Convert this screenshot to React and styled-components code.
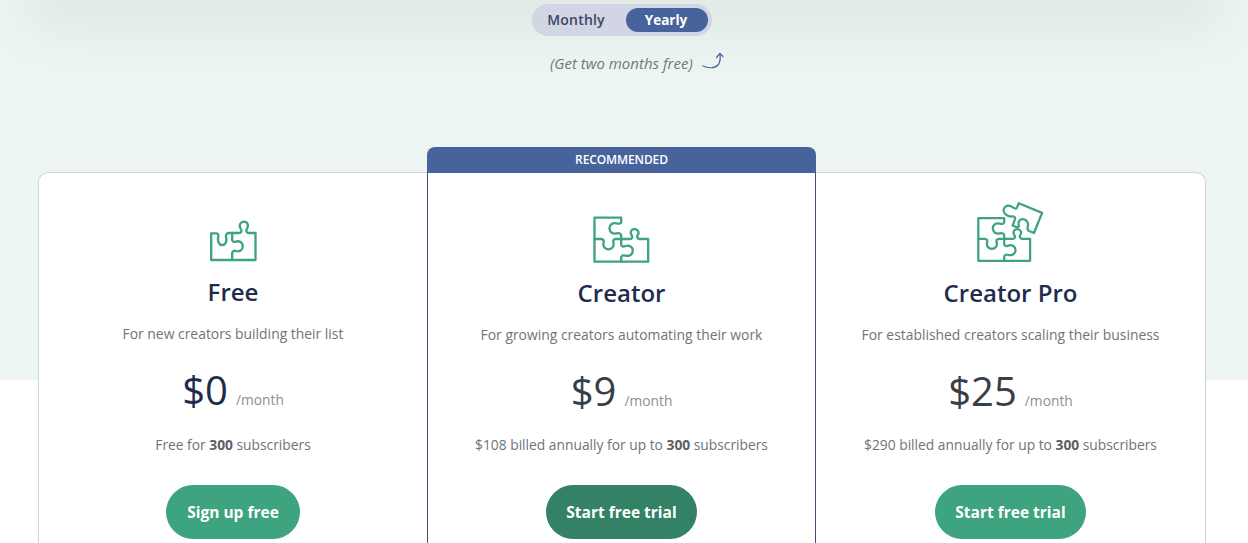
import React from "react";
import styled, { createGlobalStyle } from "styled-components";

const GlobalStyle = createGlobalStyle`
  html, body {
    margin: 0;
    padding: 0;
    background: #ffffff;
    font-family: "Open Sans", "Liberation Sans", sans-serif;
  }
`;

const plans = [
  {
    name: "Free",
    desc: "For new creators building their list",
    price: "$0",
    billing: "Free for",
    cta: "Sign up free",
    icon: "free",
  },
  {
    name: "Creator",
    desc: "For growing creators automating their work",
    price: "$9",
    billing: "$108 billed annually for up to",
    cta: "Start free trial",
    icon: "creator",
    recommended: true,
  },
  {
    name: "Creator Pro",
    desc: "For established creators scaling their business",
    price: "$25",
    billing: "$290 billed annually for up to",
    cta: "Start free trial",
    icon: "pro",
  },
];

const PuzzleIcon = ({ kind }) => {
  if (kind === "free") {
    return (
      <IconSvg width="50" height="46" viewBox="52.500 33 150 138">
        <path d="M62 165V85H78C84 85 84 92 83 98C81 110 86 120 95 120C104 120 110 110 107 98C105 90 108 85 114 84H145C153 84 155 77 150 70C145 60 150 50 160 50C171 50 175 60 170 70C165 78 168 84 176 84H195V165Z" />
        <path d="M125 84V104C125 110 130 112 136 110C146 106 157 112 157 124C157 136 146 141 136 138C130 136 125 139 125 145V165" />
      </IconSvg>
    );
  }
  if (kind === "creator") {
    return (
      <IconSvg width="58" height="49" viewBox="37.500 25 174 147">
        <path d="M42 168V36H122V48C122 54 116 55 108 53C96 50 86 58 87 69C88 80 97 86 108 83C116 81 122 84 122 90V100H148C155 100 157 94 153 88C148 80 152 70 162 70C172 70 177 80 172 88C168 94 171 100 178 100H203V168Z" />
        <path d="M42 100H62C69 100 71 105 69 112C67 122 73 131 84 131C95 131 101 122 99 112C97 105 99 100 106 100H122V116C122 122 128 124 135 121C146 117 157 124 157 135C157 146 146 153 135 150C128 148 122 150 122 156V168" />
      </IconSvg>
    );
  }
  return (
    <IconSvg width="68" height="62" viewBox="31 16 210 186">
      <path d="M35 198V66H115V78C115 84 109 85 101 83C89 80 79 88 80 99C81 110 90 116 101 113C109 111 115 114 115 120V130H141C148 130 150 124 146 118C141 110 145 100 155 100C165 100 170 110 165 118C161 124 164 130 171 130H195V198Z" />
      <path d="M35 130H55C62 130 64 135 62 142C60 152 66 161 77 161C88 161 94 152 92 142C90 135 92 130 99 130H115V146C115 152 121 154 128 151C139 147 150 154 150 165C150 176 139 183 128 180C121 178 115 180 115 186V198" />
      <path d="M153 36L160 20L232 50L207 112L192 106C186 103 186 98 188 92C191 80 183 70 173 69C163 68 157 78 160 88C161 94 156 96 150 93L141 89L148 70C150 63 146 60 140 61C128 63 116 55 113 44C112 33 122 26 132 28C140 30 148 40 153 36Z" />
    </IconSvg>
  );
};

const CurvedArrow = () => (
  <ArrowSvg width="22" height="19" viewBox="0 0 22 19">
    <path d="M1 14C6 16.500 13 16.500 16 13C18.500 10 18.500 6 18 2" />
    <path d="M14.500 5.500L18 1.500L21 4.500" />
  </ArrowSvg>
);

const App = () => {
  return (
    <Page>
      <GlobalStyle />
      <TopShadow />
      <Toggle>
        <ToggleOption>Monthly</ToggleOption>
        <ToggleOption $active>Yearly</ToggleOption>
      </Toggle>
      <Note>
        <NoteText>(Get two months free)</NoteText>
        <CurvedArrow />
      </Note>
      <Plans>
        {plans.map((plan) => (
          <Card key={plan.name} $recommended={plan.recommended}>
            {plan.recommended && <Ribbon>RECOMMENDED</Ribbon>}
            <IconSlot $free={plan.icon === "free"}>
              <PuzzleIcon kind={plan.icon} />
            </IconSlot>
            <PlanName>{plan.name}</PlanName>
            <PlanDesc>{plan.desc}</PlanDesc>
            <PriceRow>
              <Price $navy={plan.icon === "free"}>{plan.price}</Price>
              <Per>/month</Per>
            </PriceRow>
            <Billing $free={plan.icon === "free"}>
              {plan.billing} <strong>300</strong> subscribers
            </Billing>
            <Cta $dark={plan.recommended} $free={plan.icon === "free"}>
              {plan.cta}
            </Cta>
          </Card>
        ))}
      </Plans>
    </Page>
  );
};

const Page = styled.div`
  height: 543px;
  overflow: hidden;
  background: linear-gradient(#ecf5f1 380px, #ffffff 380px);
  padding-top: 4px;
  box-sizing: border-box;
`;

const TopShadow = styled.div`
  height: 0;
  margin: -4px 40px 4px;
  box-shadow: 0 0 60px 12px rgba(70, 85, 80, 0.18);
`;

const Toggle = styled.div`
  width: 180px;
  height: 32px;
  margin-left: 532px;
  padding: 4px;
  box-sizing: border-box;
  display: flex;
  justify-content: space-between;
  background: #d2d5e3;
  border-radius: 16px;
`;

const ToggleOption = styled.div`
  width: 82px;
  height: 24px;
  line-height: 24px;
  text-align: center;
  text-indent: -2px;
  font-size: ${(p) => (p.$active ? "13.500px" : "14px")};
  font-weight: ${(p) => (p.$active ? 700 : 600)};
  letter-spacing: ${(p) => (p.$active ? "0" : "0.2px")};
  border-radius: 12px;
  color: ${(p) => (p.$active ? "#ffffff" : "#3d4663")};
  background: ${(p) => (p.$active ? "#48639c" : "transparent")};
`;

const Note = styled.div`
  display: flex;
  align-items: flex-start;
  gap: 9px;
  margin: 16px 0 0 550px;
  height: 120px;
`;

const NoteText = styled.span`
  font-size: 15px;
  line-height: 22px;
  font-style: italic;
  color: #6f7a77;
`;

const ArrowSvg = styled.svg`
  fill: none;
  stroke: #48639c;
  stroke-width: 1.200;
  stroke-linecap: round;
  stroke-linejoin: round;
`;

const Plans = styled.div`
  display: grid;
  grid-template-columns: 388px 389px 389px;
  margin: 0 42px 0 38px;
  background: #ffffff;
  border: 1px solid #cdd6dd;
  border-bottom: none;
  border-radius: 10px;
  height: 500px;
`;

const Card = styled.div`
  position: relative;
  display: flex;
  flex-direction: column;
  align-items: center;
  text-align: center;
  border-left: ${(p) => (p.$recommended ? "1px solid #3e4f74" : "none")};
  border-right: ${(p) => (p.$recommended ? "1px solid #3e4f74" : "none")};
`;

const Ribbon = styled.div`
  position: absolute;
  top: -26px;
  left: -1px;
  right: -1px;
  height: 26px;
  line-height: 26px;
  background: #48639c;
  color: #ffffff;
  font-size: 12px;
  font-weight: 600;
  letter-spacing: -0.1px;
  border-radius: 8px 8px 0 0;
`;

const IconSlot = styled.div`
  height: ${(p) => (p.$free ? "89px" : "90px")};
  display: flex;
  align-items: flex-end;
`;

const IconSvg = styled.svg`
  display: block;
  fill: none;
  stroke: #3ea37f;
  stroke-width: 7;
  stroke-linejoin: round;
  stroke-linecap: round;
`;

const PlanName = styled.h3`
  margin: 14px 0 0;
  font-size: 24px;
  line-height: 32px;
  font-weight: 600;
  color: #1f2d4d;
`;

const PlanDesc = styled.p`
  margin: 15px 0 0;
  font-size: 13.900px;
  line-height: 22px;
  color: #6e7479;
`;

const PriceRow = styled.div`
  display: flex;
  align-items: baseline;
  gap: 8px;
  margin-top: 17px;
  height: 55px;
`;

const Price = styled.span`
  font-size: 40px;
  line-height: 55px;
  color: ${(p) => (p.$navy ? "#1f2d4d" : "#3a3f47")};
`;

const Per = styled.span`
  font-size: 13.800px;
  color: #8b8f94;
`;

const Billing = styled.p`
  margin: ${(p) => (p.$free ? "17px" : "16px")} 0 0;
  font-size: 13.800px;
  line-height: 22px;
  color: #6e7479;

  strong {
    font-weight: 700;
    color: #5b6066;
  }
`;

const Cta = styled.div`
  margin-top: 29px;
  height: 54px;
  line-height: 54px;
  padding: 0 ${(p) => (p.$free ? "21px" : "20px")};
  border-radius: 27px;
  font-size: 15.500px;
  font-weight: 700;
  color: #ffffff;
  background: ${(p) => (p.$dark ? "#338266" : "#3ea37f")};
`;

export default App;
